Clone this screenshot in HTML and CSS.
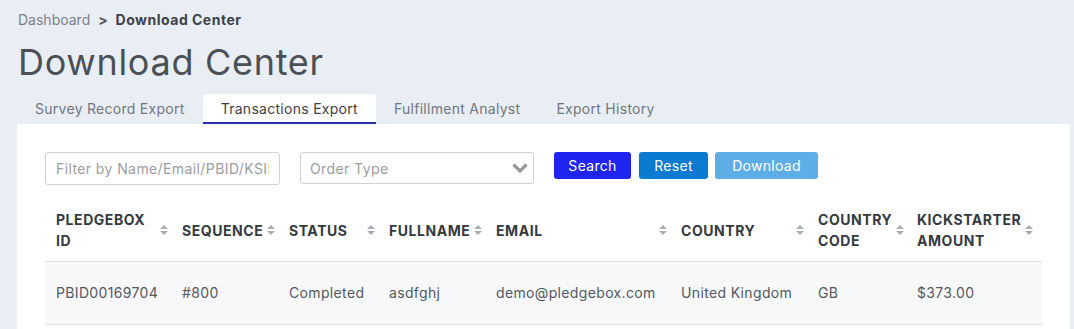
FILE: index.html
```html
<!DOCTYPE html>
<html lang="en">

<head>
    <meta charset="UTF-8">
    <meta name="viewport" content="width=device-width, initial-scale=1.0">
    <title>Download Center</title>
    <link rel="stylesheet" href="styles.css">
</head>

<body>
    <div class="page">
        <div class="crumbs">
            <span class="crumb-link">Dashboard</span>
            <span class="crumb-sep">&gt;</span>
            <span class="crumb-here">Download Center</span>
        </div>
        <h1 class="title">Download Center</h1>

        <div class="tabs">
            <div class="tab">Survey Record Export</div>
            <div class="tab active">Transactions Export</div>
            <div class="tab">Fulfillment Analyst</div>
            <div class="tab">Export History</div>
        </div>

        <div class="card">
            <form class="filters">
                <input type="text" class="field" placeholder="Filter by Name/Email/PBID/KSID">
                <div class="select">
                    <span>Order Type</span>
                    <svg width="18" height="12" viewBox="0 0 18 12">
                        <path d="M2.5 2.5 L9 9 L15.5 2.5" fill="none" stroke="#9a9a9a" stroke-width="3.2" />
                    </svg>
                </div>
                <button type="button" class="btn btn-search">Search</button>
                <button type="button" class="btn btn-reset">Reset</button>
                <button type="button" class="btn btn-download">Download</button>
            </form>

            <div class="table-wrap">
                <table class="grid">
                    <colgroup>
                        <col style="width:126px">
                        <col style="width:107px">
                        <col style="width:100px">
                        <col style="width:107px">
                        <col style="width:185px">
                        <col style="width:137px">
                        <col style="width:99px">
                        <col style="width:126px">
                        <col style="width:10px">
                    </colgroup>
                    <thead>
                        <tr>
                            <th><div class="th"><span>PLEDGEBOX ID</span><svg class="sort" viewBox="0 0 8 12"><path d="M0 5 L4 1 L8 5 Z M0 7 L4 11 L8 7 Z" /></svg></div></th>
                            <th><div class="th"><span>SEQUENCE</span><svg class="sort" viewBox="0 0 8 12"><path d="M0 5 L4 1 L8 5 Z M0 7 L4 11 L8 7 Z" /></svg></div></th>
                            <th><div class="th"><span>STATUS</span><svg class="sort" viewBox="0 0 8 12"><path d="M0 5 L4 1 L8 5 Z M0 7 L4 11 L8 7 Z" /></svg></div></th>
                            <th><div class="th"><span>FULLNAME</span><svg class="sort" viewBox="0 0 8 12"><path d="M0 5 L4 1 L8 5 Z M0 7 L4 11 L8 7 Z" /></svg></div></th>
                            <th><div class="th"><span>EMAIL</span><svg class="sort" viewBox="0 0 8 12"><path d="M0 5 L4 1 L8 5 Z M0 7 L4 11 L8 7 Z" /></svg></div></th>
                            <th><div class="th"><span>COUNTRY</span><svg class="sort" viewBox="0 0 8 12"><path d="M0 5 L4 1 L8 5 Z M0 7 L4 11 L8 7 Z" /></svg></div></th>
                            <th><div class="th"><span>COUNTRY CODE</span><svg class="sort" viewBox="0 0 8 12"><path d="M0 5 L4 1 L8 5 Z M0 7 L4 11 L8 7 Z" /></svg></div></th>
                            <th><div class="th"><span>KICKSTARTER AMOUNT</span><svg class="sort" viewBox="0 0 8 12"><path d="M0 5 L4 1 L8 5 Z M0 7 L4 11 L8 7 Z" /></svg></div></th>
                            <th class="th-edge"></th>
                        </tr>
                    </thead>
                    <tbody>
                        <tr>
                            <td>PBID00169704</td>
                            <td>#800</td>
                            <td>Completed</td>
                            <td>asdfghj</td>
                            <td>demo@pledgebox.com</td>
                            <td>United Kingdom</td>
                            <td>GB</td>
                            <td>$373.00</td>
                            <td class="td-edge"></td>
                        </tr>
                    </tbody>
                </table>
            </div>
        </div>
    </div>
</body>

</html>
```

FILE: styles.css
```css
html {
font-family: "Inter", "DejaVu Sans", sans-serif;
}

body {
margin: 0;
background-color: #e9eef5;
color: #495057;
}

.page {
padding: 10px 4px 0 17px;
}

.crumbs {
font-size: 14px;
line-height: 20px;
padding-left: 1px;
}

.crumb-link {
color: #7b8087;
}

.crumb-sep {
color: #555;
font-weight: 700;
margin: 0 4px;
}

.crumb-here {
color: #3d4248;
font-weight: 700;
letter-spacing: 0.5px;
}

.title {
margin: 10px 0 10px 1px;
font-size: 36px;
line-height: 44px;
font-weight: 400;
letter-spacing: 0.7px;
color: #4b5056;
}

.tabs {
display: flex;
height: 30px;
}

.tab {
padding: 0 18px;
font-size: 14px;
line-height: 30px;
letter-spacing: 0.28px;
color: #707780;
}

.tab.active {
background-color: #fff;
color: #3d4248;
border-radius: 4px 4px 0 0;
box-shadow: inset 0 -2px 0 #2a2fb0;
}

.card {
background-color: #fff;
padding: 28px 27px 4px 28px;
}

.filters {
display: flex;
align-items: flex-start;
}

.field {
box-sizing: border-box;
width: 235px;
height: 33px;
border: 1px solid #cfd2d6;
border-radius: 3px;
padding: 0 10px;
font-family: inherit;
font-size: 14px;
letter-spacing: 0.4px;
color: #495057;
}

.field::placeholder {
color: #9a9ea3;
}

.select {
box-sizing: border-box;
width: 234px;
height: 32px;
margin-left: 20px;
border: 1px solid #cfd2d6;
border-radius: 3px;
padding: 0 4px 0 9px;
display: flex;
align-items: center;
justify-content: space-between;
font-size: 14px;
letter-spacing: 0.4px;
color: #9a9ea3;
}

.btn {
height: 27px;
border: none;
border-radius: 3px;
color: #fff;
font-family: inherit;
font-size: 14px;
letter-spacing: 0.3px;
padding: 0;
}

.btn-search {
width: 77px;
margin-left: 20px;
background-color: #1f24f0;
}

.btn-reset {
width: 69px;
margin-left: 8px;
background-color: #0b7ad1;
}

.btn-download {
width: 103px;
margin-left: 7px;
background-color: #5daee6;
}

.table-wrap {
margin-top: 18px;
overflow: hidden;
}

.grid {
table-layout: fixed;
border-collapse: collapse;
width: 997px;
font-size: 14px;
}

.grid th {
padding: 6px 3px 10px 11px;
text-align: left;
font-size: 14px;
line-height: 21px;
font-weight: 700;
letter-spacing: 0.55px;
color: #343a40;
border-bottom: 1px solid #dde1e6;
}

.grid .th-edge,
.grid .td-edge {
padding: 0;
}

.th {
display: flex;
align-items: center;
justify-content: space-between;
}

.sort {
width: 8px;
height: 12px;
flex: none;
margin-left: 4px;
fill: #a9aeb4;
}

.grid td {
padding: 20px 4px 21px 11px;
line-height: 21px;
letter-spacing: 0.35px;
background-color: #f7f8fa;
color: #53595f;
border-bottom: 1px solid #dde1e6;
white-space: nowrap;
overflow: hidden;
}
```
